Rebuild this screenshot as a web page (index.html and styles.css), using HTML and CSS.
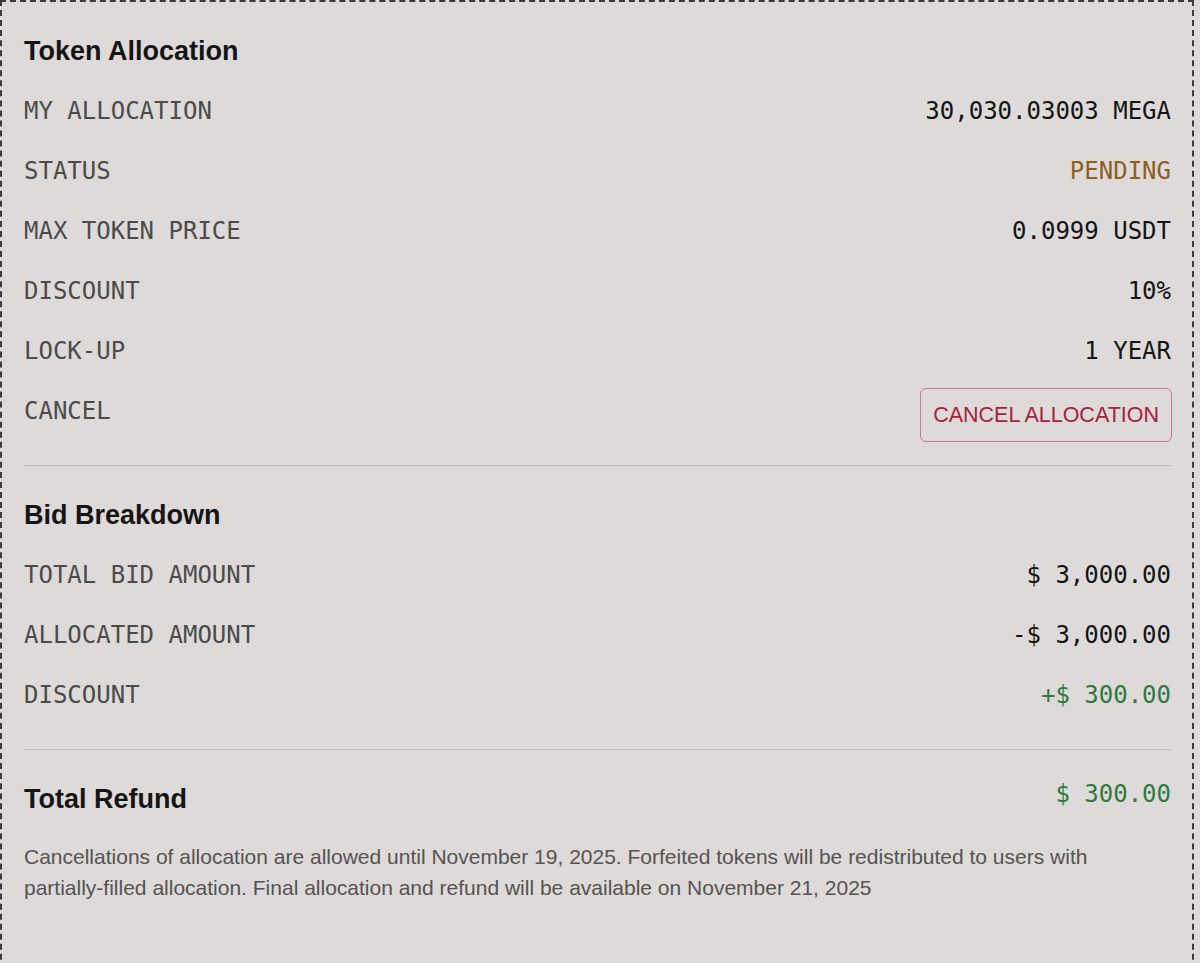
FILE: index.html
```html
<!DOCTYPE html>
<html lang="en">
<head>
<meta charset="utf-8">
<title>Token Allocation</title>
<link rel="stylesheet" href="styles.css">
</head>
<body>
<div class="panel">
  <section class="section first">
    <h2 class="heading">Token Allocation</h2>
    <div class="rows">
      <div class="row"><span class="label">MY ALLOCATION</span><span class="value">30,030.03003 MEGA</span></div>
      <div class="row"><span class="label">STATUS</span><span class="value pending">PENDING</span></div>
      <div class="row"><span class="label">MAX TOKEN PRICE</span><span class="value">0.0999 USDT</span></div>
      <div class="row"><span class="label">DISCOUNT</span><span class="value">10%</span></div>
      <div class="row"><span class="label">LOCK-UP</span><span class="value">1 YEAR</span></div>
      <div class="row"><span class="label">CANCEL</span><button class="cancel-btn" type="button">CANCEL ALLOCATION</button></div>
    </div>
  </section>
  <section class="section">
    <h2 class="heading">Bid Breakdown</h2>
    <div class="rows">
      <div class="row"><span class="label">TOTAL BID AMOUNT</span><span class="value">$ 3,000.00</span></div>
      <div class="row"><span class="label">ALLOCATED AMOUNT</span><span class="value">-$ 3,000.00</span></div>
      <div class="row"><span class="label">DISCOUNT</span><span class="value positive">+$ 300.00</span></div>
    </div>
  </section>
  <section class="section last">
    <div class="total-row">
      <h2 class="heading">Total Refund</h2>
      <span class="value positive total-value">$ 300.00</span>
    </div>
    <p class="note">Cancellations of allocation are allowed until November 19, 2025. Forfeited tokens will be redistributed to users with partially-filled allocation. Final allocation and refund will be available on November 21, 2025</p>
  </section>
</div>
</body>
</html>
```

FILE: styles.css
```css
html, body {
  margin: 0;
  padding: 0;
  background: #dedad9;
}

body {
  font-family: "Liberation Sans", Arial, Helvetica, sans-serif;
  color: #1a1a1a;
}

.panel {
  box-sizing: border-box;
  width: 1194px;
  min-height: 1000px;
  border: 2px dashed #3a3a3a;
  padding: 0 21px 0 22px;
}

.section {
  padding: 32px 0 32px;
  border-top: 1px solid #bebab9;
}

.section.first {
  border-top: none;
  padding-top: 33px;
}

.section + .section {
  padding-top: 33px;
}

.heading {
  margin: 0 0 22px;
  font-size: 27px;
  line-height: 32px;
  font-weight: 700;
  color: #151515;
}

.rows {
  display: flex;
  flex-direction: column;
  gap: 16px;
}

.row {
  display: flex;
  justify-content: space-between;
  align-items: flex-start;
  height: 44px;
}

.label,
.value {
  font-family: "DejaVu Sans Mono", "Liberation Mono", monospace;
  font-size: 24px;
  line-height: 44px;
  letter-spacing: 0;
  white-space: nowrap;
}

.label {
  color: #4b4b4b;
}

.value {
  color: #141414;
}

.value.pending {
  color: #8c5f1d;
}

.value.positive {
  color: #2f7a3e;
}

.cancel-btn {
  box-sizing: border-box;
  height: 54px;
  padding: 0 12px;
  margin-top: -1px;
  margin-right: -1px;
  border: 1px solid #c27d89;
  border-radius: 6px;
  background: transparent;
  color: #a5223d;
  font-family: "Liberation Sans", Arial, Helvetica, sans-serif;
  font-size: 21.5px;
  line-height: 52px;
  cursor: pointer;
}

.total-row {
  display: flex;
  justify-content: space-between;
  align-items: flex-start;
}

.total-row .heading {
  margin: 0;
}

.total-value {
  line-height: 22px;
}

.note {
  margin: 26px 0 0;
  font-size: 21px;
  line-height: 31px;
  color: #555353;
}
```
